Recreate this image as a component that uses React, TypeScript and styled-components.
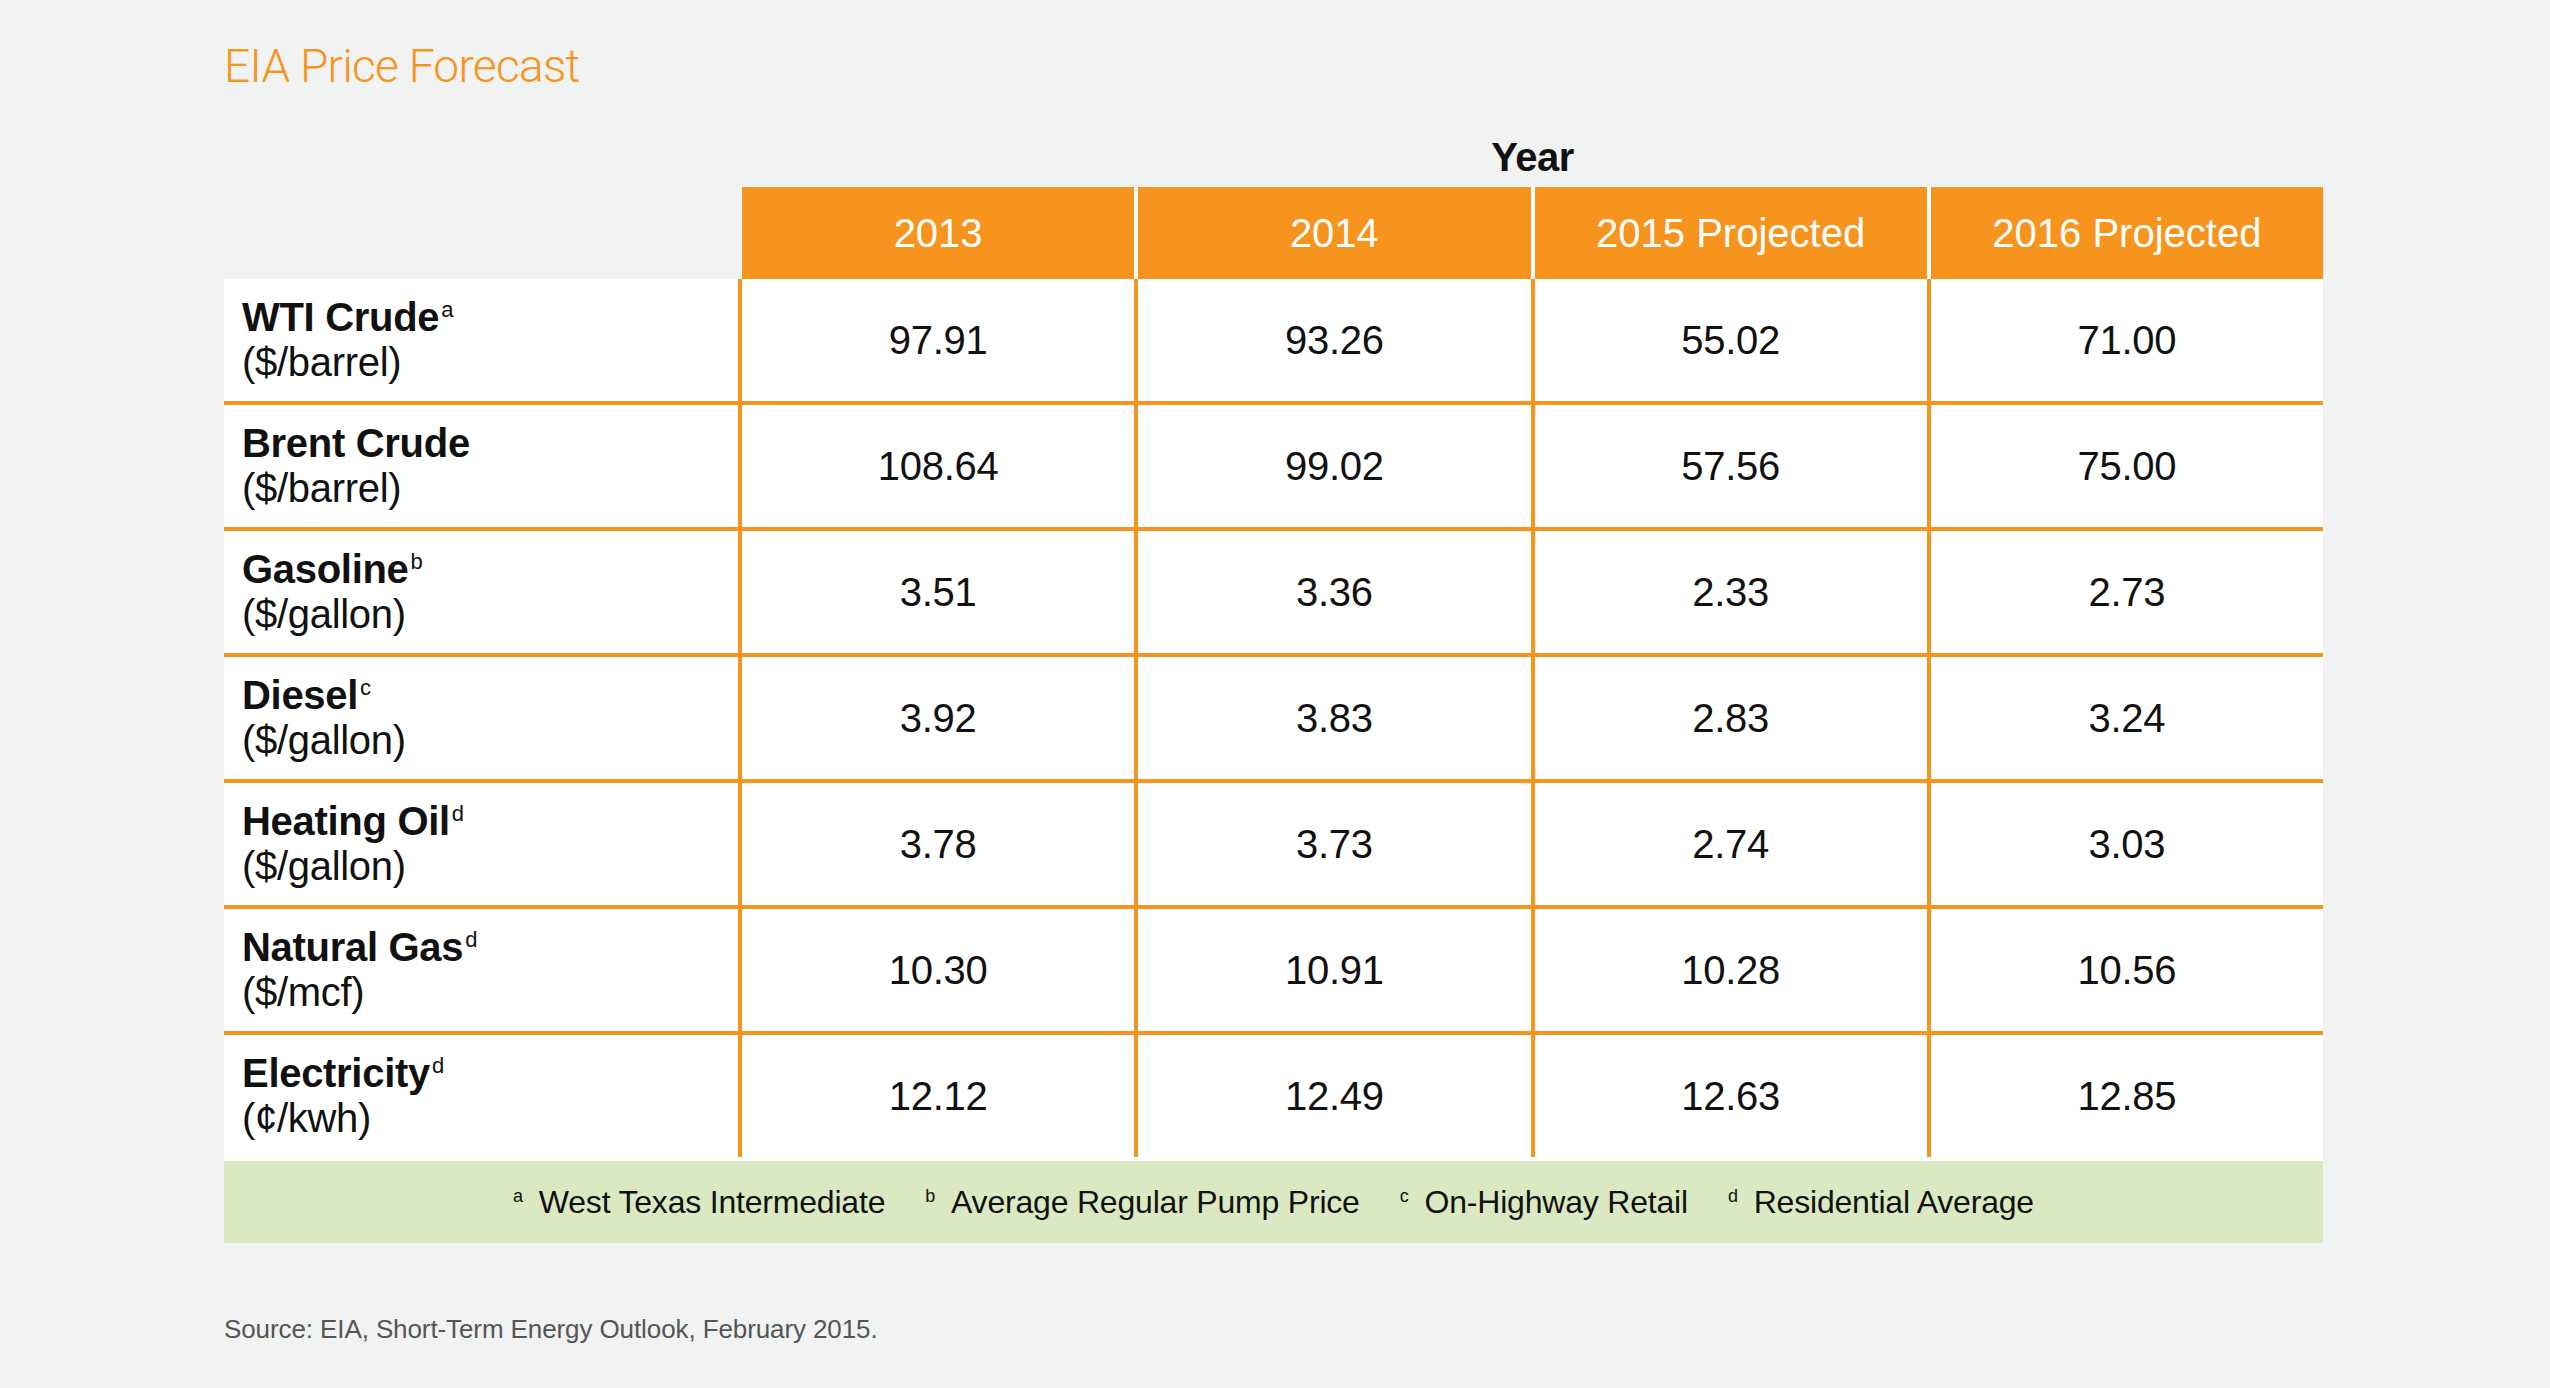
import styled, { createGlobalStyle } from 'styled-components';

const ORANGE = '#f7941d';
const GREEN = '#dbe9c3';
const PAGE = '#f1f2f2';

const GlobalStyle = createGlobalStyle`
  html, body {
    margin: 0;
    padding: 0;
    background: ${PAGE};
    font-family: "Liberation Sans", Arial, sans-serif;
    color: #111;
  }
`;

type Row = {
  name: string;
  sup?: string;
  unit: string;
  values: string[];
};

const YEARS = ['2013', '2014', '2015 Projected', '2016 Projected'];

const ROWS: Row[] = [
  { name: 'WTI Crude', sup: 'a', unit: '($/barrel)', values: ['97.91', '93.26', '55.02', '71.00'] },
  { name: 'Brent Crude', unit: '($/barrel)', values: ['108.64', '99.02', '57.56', '75.00'] },
  { name: 'Gasoline', sup: 'b', unit: '($/gallon)', values: ['3.51', '3.36', '2.33', '2.73'] },
  { name: 'Diesel', sup: 'c', unit: '($/gallon)', values: ['3.92', '3.83', '2.83', '3.24'] },
  { name: 'Heating Oil', sup: 'd', unit: '($/gallon)', values: ['3.78', '3.73', '2.74', '3.03'] },
  { name: 'Natural Gas', sup: 'd', unit: '($/mcf)', values: ['10.30', '10.91', '10.28', '10.56'] },
  { name: 'Electricity', sup: 'd', unit: '(¢/kwh)', values: ['12.12', '12.49', '12.63', '12.85'] },
];

const NOTES = [
  { mark: 'a', text: 'West Texas Intermediate' },
  { mark: 'b', text: 'Average Regular Pump Price' },
  { mark: 'c', text: 'On-Highway Retail' },
  { mark: 'd', text: 'Residential Average' },
];

export default function App() {
  return (
    <>
      <GlobalStyle />
      <Page>
        <Title>EIA Price Forecast</Title>

        <YearRow>
          <div />
          <YearLabel>Year</YearLabel>
        </YearRow>

        <HeadRow>
          <div />
          <HeadCells>
            {YEARS.map((y) => (
              <HeadCell key={y}>{y}</HeadCell>
            ))}
          </HeadCells>
        </HeadRow>

        <Body>
          {ROWS.map((r) => (
            <BodyRow key={r.name}>
              <Label>
                <Name>
                  {r.name}
                  {r.sup && <Sup>{r.sup}</Sup>}
                </Name>
                <Unit>{r.unit}</Unit>
              </Label>
              <Values>
                {r.values.map((v, i) => (
                  <Value key={i}>{v}</Value>
                ))}
              </Values>
            </BodyRow>
          ))}
        </Body>

        <Notes>
          {NOTES.map((n) => (
            <Note key={n.mark}>
              <NoteMark>{n.mark}</NoteMark>
              {n.text}
            </Note>
          ))}
        </Notes>

        <Source>Source: EIA, Short-Term Energy Outlook, February 2015.</Source>
      </Page>
    </>
  );
}

const Page = styled.div`
  width: 2099px;
  margin-left: 224px;
  padding-top: 44px;
  padding-bottom: 40px;
`;

const Title = styled.h1`
  margin: 0;
  font-family: Roboto, "Liberation Sans", sans-serif;
  font-size: 46px;
  line-height: 45px;
  font-weight: 300;
  letter-spacing: -0.7px;
  color: ${ORANGE};
`;

const YearRow = styled.div`
  display: grid;
  grid-template-columns: 514px 1fr;
  column-gap: 4px;
  margin-top: 48px;
`;

const YearLabel = styled.div`
  text-align: center;
  font-size: 40px;
  line-height: 40px;
  font-weight: 700;
  letter-spacing: -0.5px;
`;

const HeadRow = styled.div`
  display: grid;
  grid-template-columns: 514px 1fr;
  column-gap: 4px;
  margin-top: 10px;
`;

const HeadCells = styled.div`
  display: grid;
  grid-template-columns: repeat(4, 1fr);
  column-gap: 4px;
  background: #fff;
`;

const HeadCell = styled.div`
  height: 92px;
  display: flex;
  align-items: center;
  justify-content: center;
  background: ${ORANGE};
  color: #fff;
  font-size: 40px;
`;

const Body = styled.div`
  display: flex;
  flex-direction: column;
  gap: 4px;
  background: ${ORANGE};
  border-bottom: 4px solid #fff;
`;

const BodyRow = styled.div`
  display: grid;
  grid-template-columns: 514px 1fr;
  column-gap: 4px;
  height: 122px;
`;

const Label = styled.div`
  background: #fff;
  display: flex;
  flex-direction: column;
  justify-content: center;
  padding-left: 18px;
  font-size: 40px;
  line-height: 45px;
  letter-spacing: -0.3px;
`;

const Name = styled.div`
  font-weight: 700;
`;

const Sup = styled.span`
  font-size: 22px;
  font-weight: 400;
  line-height: 0;
  vertical-align: 14px;
  margin-left: 2px;
  letter-spacing: 0;
`;

const Unit = styled.div`
  font-weight: 400;
`;

const Values = styled.div`
  display: grid;
  grid-template-columns: repeat(4, 1fr);
  column-gap: 4px;
`;

const Value = styled.div`
  background: #fff;
  display: flex;
  align-items: center;
  justify-content: center;
  font-size: 40px;
  letter-spacing: -0.3px;
`;

const Notes = styled.div`
  height: 82px;
  background: ${GREEN};
  display: flex;
  align-items: center;
  justify-content: center;
  gap: 40px;
  font-size: 32px;
  letter-spacing: -0.2px;
`;

const Note = styled.div`
  display: flex;
  align-items: baseline;
`;

const NoteMark = styled.span`
  font-size: 18px;
  position: relative;
  top: -11px;
  margin-right: 16px;
`;

const Source = styled.div`
  margin-top: 73px;
  font-size: 26px;
  line-height: 26px;
  color: #555;
  letter-spacing: -0.1px;
`;
